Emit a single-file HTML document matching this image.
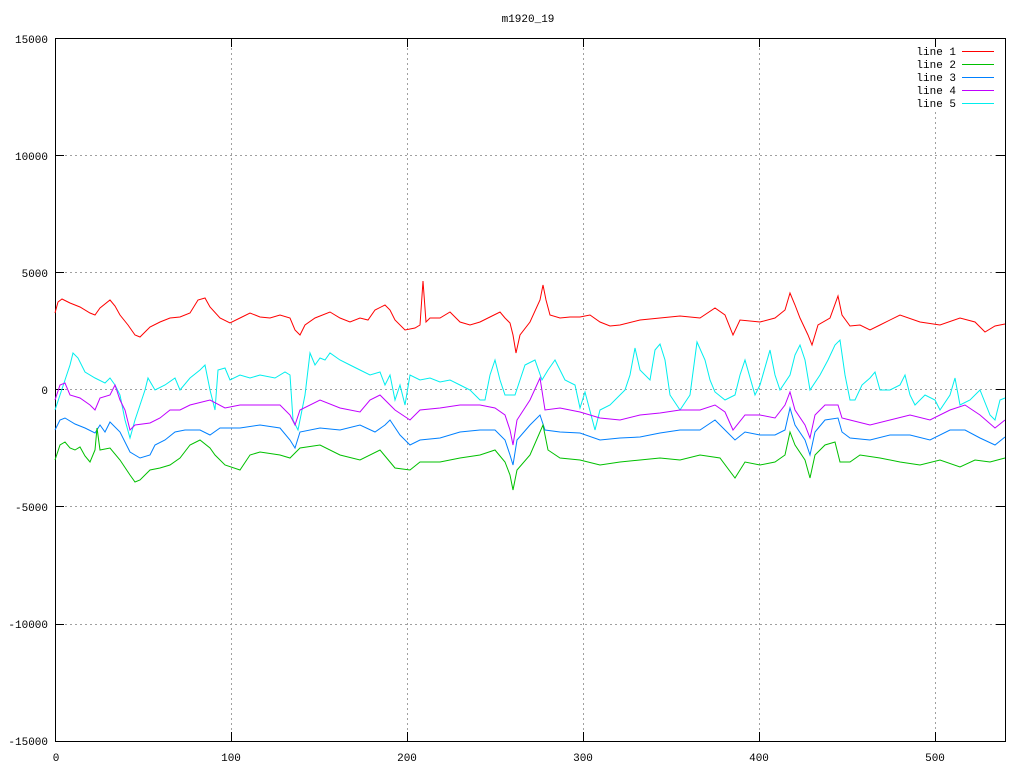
<!DOCTYPE html>
<html><head><style>
html,body{margin:0;padding:0;background:#fff;width:1024px;height:768px;overflow:hidden}
svg{display:block}
text{font-family:"Liberation Mono",monospace;font-size:11px;fill:#000}
</style></head><body>
<svg width="1024" height="768" xmlns="http://www.w3.org/2000/svg">
<g stroke="#a0a0a0" stroke-width="1" stroke-dasharray="2,3" shape-rendering="crispEdges">
<line x1="55" y1="155.5" x2="1005" y2="155.5"/>
<line x1="55" y1="272.5" x2="1005" y2="272.5"/>
<line x1="55" y1="389.5" x2="1005" y2="389.5"/>
<line x1="55" y1="506.5" x2="1005" y2="506.5"/>
<line x1="55" y1="624.5" x2="1005" y2="624.5"/>
<line x1="231.5" y1="38" x2="231.5" y2="741"/>
<line x1="407.5" y1="38" x2="407.5" y2="741"/>
<line x1="583.5" y1="38" x2="583.5" y2="741"/>
<line x1="759.5" y1="38" x2="759.5" y2="741"/>
<line x1="935.5" y1="112" x2="935.5" y2="741"/>
</g>
<rect x="55.5" y="38.5" width="950" height="703" fill="none" stroke="#000" shape-rendering="crispEdges"/>
<g stroke="#000" shape-rendering="crispEdges">
<line x1="55" y1="155.5" x2="64" y2="155.5"/><line x1="996" y1="155.5" x2="1005" y2="155.5"/>
<line x1="55" y1="272.5" x2="64" y2="272.5"/><line x1="996" y1="272.5" x2="1005" y2="272.5"/>
<line x1="55" y1="389.5" x2="64" y2="389.5"/><line x1="996" y1="389.5" x2="1005" y2="389.5"/>
<line x1="55" y1="506.5" x2="64" y2="506.5"/><line x1="996" y1="506.5" x2="1005" y2="506.5"/>
<line x1="55" y1="624.5" x2="64" y2="624.5"/><line x1="996" y1="624.5" x2="1005" y2="624.5"/>
<line x1="231.5" y1="741" x2="231.5" y2="732"/><line x1="231.5" y1="38" x2="231.5" y2="47"/>
<line x1="407.5" y1="741" x2="407.5" y2="732"/><line x1="407.5" y1="38" x2="407.5" y2="47"/>
<line x1="583.5" y1="741" x2="583.5" y2="732"/><line x1="583.5" y1="38" x2="583.5" y2="47"/>
<line x1="759.5" y1="741" x2="759.5" y2="732"/><line x1="759.5" y1="38" x2="759.5" y2="47"/>
<line x1="935.5" y1="741" x2="935.5" y2="732"/><line x1="935.5" y1="38" x2="935.5" y2="47"/>
</g>
<text x="528" y="22" text-anchor="middle">m1920_19</text>
<g text-anchor="end">
<text x="48" y="43">15000</text>
<text x="48" y="160">10000</text>
<text x="48" y="277">5000</text>
<text x="48" y="394">0</text>
<text x="48" y="511">-5000</text>
<text x="48" y="628">-10000</text>
<text x="48" y="745">-15000</text>
</g>
<g text-anchor="middle">
<text x="56" y="761">0</text>
<text x="231" y="761">100</text>
<text x="407" y="761">200</text>
<text x="583" y="761">300</text>
<text x="759" y="761">400</text>
<text x="935" y="761">500</text>
</g>
<g text-anchor="end">
<text x="956" y="55">line 1</text>
<text x="956" y="68">line 2</text>
<text x="956" y="81">line 3</text>
<text x="956" y="94">line 4</text>
<text x="956" y="107">line 5</text>
</g>
<g stroke-width="1" fill="none">
<line x1="962" y1="51.5" x2="994" y2="51.5" stroke="#ff0000"/>
<line x1="962" y1="64.5" x2="994" y2="64.5" stroke="#00c000"/>
<line x1="962" y1="77.5" x2="994" y2="77.5" stroke="#0080ff"/>
<line x1="962" y1="90.5" x2="994" y2="90.5" stroke="#c000ff"/>
<line x1="962" y1="103.5" x2="994" y2="103.5" stroke="#00eeee"/>
<polyline stroke="#ff0000" points="55,313 58,302 62,299 70,303 80,307 90,313 95,315 100,308 110,300 115,306 120,315 128,325 135,335 140,337 145,332 150,327 160,322 170,318 180,317 190,313 198,300 205,298 210,307 220,318 230,323 240,318 250,313 260,317 270,318 280,315 290,318 295,330 300,335 305,325 315,318 330,312 340,318 350,322 360,318 368,320 375,310 385,305 390,310 395,320 405,330 415,328 420,325 423,281 426,322 430,318 440,318 450,312 460,322 470,325 480,322 490,317 500,312 505,318 510,323 513,335 516,353 520,335 530,322 540,300 543,285 546,300 550,315 560,318 570,317 580,317 590,315 600,322 610,326 620,325 640,320 660,318 680,316 700,318 715,308 725,315 733,335 740,320 760,322 775,318 785,310 790,293 795,305 800,318 808,335 812,345 818,325 830,318 838,296 842,315 850,326 860,325 870,330 880,325 900,315 920,322 940,325 960,318 975,322 985,332 995,326 1005,324"/>
<polyline stroke="#00eeee" points="55,410 60,395 65,380 70,365 73,353 78,358 85,372 95,378 105,383 110,378 115,385 120,395 125,420 130,438 135,420 140,405 145,390 148,378 155,390 165,385 175,378 180,390 190,378 200,370 205,365 210,390 215,410 218,370 225,368 230,380 240,375 250,378 260,375 275,378 285,372 290,375 293,420 298,430 305,395 310,353 315,365 320,358 325,360 330,353 340,360 350,365 360,370 370,375 380,372 385,385 390,375 395,400 400,385 405,405 410,375 420,380 430,378 440,382 450,380 460,385 470,390 480,400 485,400 490,375 495,360 500,380 505,395 515,395 520,380 525,365 535,360 542,380 548,370 555,360 565,380 575,385 580,408 585,392 595,430 600,410 610,405 625,390 630,375 635,348 640,370 650,380 655,350 660,344 665,360 670,395 680,410 690,395 697,342 705,360 710,380 715,392 725,400 735,395 740,375 745,360 755,395 760,385 770,350 775,375 780,390 790,375 795,355 800,345 805,360 810,390 820,375 828,360 835,345 840,340 845,375 850,400 855,400 862,385 870,378 875,372 880,390 890,390 900,385 905,375 910,395 915,405 925,395 935,400 940,410 950,395 955,378 960,405 970,400 980,390 990,415 995,420 1000,400 1005,398"/>
<polyline stroke="#c000ff" points="55,400 60,385 65,383 70,395 80,398 90,405 95,410 100,398 110,395 115,385 120,400 125,410 130,430 135,425 150,423 160,418 170,410 180,410 190,405 210,400 225,408 240,405 260,405 280,405 290,415 295,425 300,410 320,400 340,408 360,412 370,400 380,395 395,410 410,420 420,410 440,408 460,405 480,405 495,408 505,415 510,430 513,445 517,420 530,400 540,378 545,410 560,408 580,412 600,418 620,420 640,415 660,413 680,410 700,410 715,405 725,412 733,430 745,415 760,415 775,418 785,405 790,392 795,410 805,425 810,438 815,415 825,405 838,405 842,418 850,420 870,425 890,420 910,415 930,420 950,410 965,405 980,415 995,428 1005,420"/>
<polyline stroke="#0080ff" points="55,430 60,420 65,418 75,424 85,428 95,433 100,425 105,432 110,422 120,432 130,452 140,458 150,455 155,445 165,440 175,432 185,430 200,430 210,435 220,428 240,428 260,425 280,428 290,440 295,448 300,432 320,428 340,430 360,425 375,432 385,425 390,420 400,435 410,445 420,440 440,438 460,432 480,430 495,430 505,440 510,455 513,465 517,440 530,425 540,415 545,430 560,432 580,433 600,440 620,438 640,437 660,433 680,430 700,430 715,420 725,430 735,440 745,432 760,435 775,435 785,430 790,408 795,425 805,440 810,455 815,432 825,420 838,418 842,432 850,438 870,440 890,435 910,435 930,440 950,430 965,430 980,438 995,445 1005,437"/>
<polyline stroke="#00c000" points="55,460 60,445 65,442 70,448 75,450 80,447 85,456 90,462 95,450 97,428 100,450 110,448 120,460 130,475 135,482 140,480 150,470 160,468 170,465 180,458 190,445 200,440 210,448 215,455 225,465 240,470 250,455 260,452 280,455 290,458 300,448 320,445 340,455 360,460 380,450 395,468 410,470 420,462 440,462 460,458 480,455 495,450 505,462 510,475 513,490 517,470 530,455 543,425 548,450 560,458 580,460 600,465 620,462 640,460 660,458 680,460 700,455 720,458 735,478 745,462 760,465 775,462 785,455 790,432 795,445 805,460 810,478 815,455 825,445 835,442 840,462 850,462 860,455 880,458 900,462 920,465 940,460 960,467 975,460 990,462 1005,458"/>
</g>
</svg>
</body></html>
